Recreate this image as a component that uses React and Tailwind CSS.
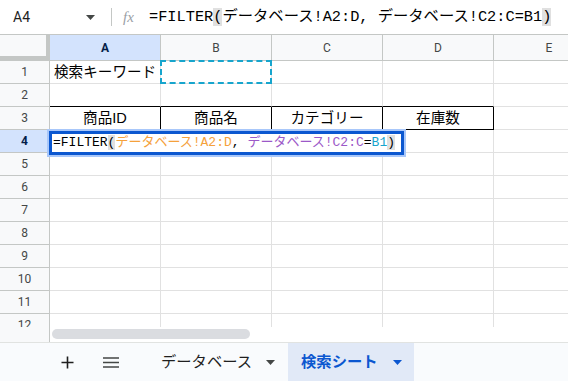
import React from "react";

const SANS = { fontFamily: '"Liberation Sans", Arial, "Noto Sans CJK JP", sans-serif' };
const ROBO = { fontFamily: 'Roboto, "Liberation Sans", "Noto Sans CJK JP", sans-serif' };
const MONO = { fontFamily: '"Liberation Mono", "Noto Sans CJK JP", monospace' };

const COLS = ["A", "B", "C", "D", "E"];

function Caret({ className }) {
  return (
    <svg width="9" height="5" viewBox="0 0 9 5" className={className}>
      <path d="M0 0 L9 0 L4.5 5 Z" fill="currentColor" />
    </svg>
  );
}

function Row({ n }) {
  const active = n === 4;
  return (
    <div className="flex h-[23px] shrink-0">
      <div
        className={`w-[50px] shrink-0 border-r border-b border-[#c4c7c5] flex items-center justify-center text-[12px] ${
          active ? "bg-[#d3e3fd] font-bold text-[#041e49]" : "bg-[#f8f9fa] text-[#444746]"
        }`}
        style={ROBO}
      >
        {n}
      </div>
      {COLS.map((c, i) => {
        let cls = "border-[#e1e1e1]";
        let content = null;
        if (n === 3 && i < 4) cls = "border-black";
        if (n === 2 && i < 4) cls = "border-b-black border-r-[#e1e1e1]";
        if (n === 1 && i === 0)
          content = <span className="pl-[4px] pt-[2px]">検索キーワード</span>;
        if (n === 3) {
          const t = ["商品ID", "商品名", "カテゴリー", "在庫数"][i];
          if (t) content = <span className="w-full text-center pt-[1px]">{t}</span>;
        }
        return (
          <div
            key={c}
            className={`w-[111px] shrink-0 border-r border-b ${cls} flex items-center text-[14.6px] text-black relative`}
            style={SANS}
          >
            {content}
            {n === 1 && i === 1 && (
              <div className="absolute left-[-1px] top-[-1px] w-[112px] h-[24px] border-2 border-dashed border-[#17a5cd]" />
            )}
          </div>
        );
      })}
    </div>
  );
}

export default function App() {
  return (
    <div className="w-[568px] h-[381px] bg-white flex flex-col overflow-hidden relative">
      {/* formula bar */}
      <div className="h-[35px] shrink-0 border-b border-[#c4c7c5] flex items-center">
        <div className="w-[86px] pl-[13px] text-[14px] text-[#1f1f1f]" style={ROBO}>
          A4
        </div>
        <Caret className="text-[#444746] mt-[1px]" />
        <div className="ml-[16px] w-px h-[18px] bg-[#c4c7c5]" />
        <div
          className="ml-[11px] w-[16px] text-[15px] italic text-[#9aa0a6]"
          style={{ fontFamily: '"Liberation Serif", serif' }}
        >
          fx
        </div>
        <div className="ml-[10px] text-[15.3px] text-black whitespace-nowrap" style={MONO}>
          =FILTER<span className="bg-[#e0e0e0]">(</span>データベース!A2:D, データベース!C2:C=B1
          <span className="bg-[#e0e0e0]">)</span>
        </div>
      </div>

      {/* grid */}
      <div className="h-[292px] shrink-0 overflow-hidden relative">
        <div className="flex h-[26px] shrink-0 border-b border-[#c4c7c5] bg-[#f8f9fa]">
          <div className="w-[50px] shrink-0 border-r-4 border-b-4 border-[#c4c7c5] bg-[#f8f9fa]" />
          {COLS.map((c, i) => (
            <div
              key={c}
              className={`w-[111px] shrink-0 border-r border-[#c4c7c5] flex items-center justify-center text-[12px] ${
                i === 0 ? "bg-[#d3e3fd] font-bold text-[#041e49]" : "text-[#444746]"
              }`}
              style={ROBO}
            >
              {c}
            </div>
          ))}
        </div>
        {Array.from({ length: 12 }, (_, k) => (
          <Row key={k} n={k + 1} />
        ))}

        {/* in-cell editor */}
        <div className="absolute left-[47px] top-[94px] w-[359px] h-[28px] border-2 border-[#a8c7fa]">
          <div className="w-full h-full border-[3px] border-[#0b57d0] bg-white flex items-center pl-[1px]">
            <span className="text-[13px] text-black whitespace-nowrap" style={MONO}>
              =FILTER<span className="bg-[#e0e0e0]">(</span>
              <span className="text-[#f5a13b]">データベース!A2:D</span>,{" "}
              <span className="text-[#9c59c8]">データベース!C2:C</span>=
              <span className="text-[#17a5cd]">B1</span>
              <span className="bg-[#e0e0e0]">)</span>
            </span>
          </div>
        </div>
      </div>

      {/* scrollbar */}
      <div className="h-[15px] shrink-0 flex">
        <div className="w-[50px] shrink-0 bg-[#f8f9fa] border-r border-[#c4c7c5]" />
        <div className="flex-1 pl-[2px] pt-[2px]">
          <div className="w-[198px] h-[10px] rounded-full bg-[#dadce0]" />
        </div>
      </div>

      {/* sheet tabs */}
      <div className="h-[39px] shrink-0 border-t border-[#e1e3e1] bg-[#f9fbfd] flex items-stretch">
        <div className="w-[61px]" />
        <div className="flex items-center">
          <svg width="13" height="13" viewBox="0 0 13 13">
            <path d="M6.5 0.5 V12.5 M0.5 6.5 H12.5" stroke="#1f1f1f" strokeWidth="1.6" />
          </svg>
        </div>
        <div className="w-[29px]" />
        <div className="flex items-center">
          <svg width="16" height="11" viewBox="0 0 16 11">
            <path d="M0 1 H16 M0 5.5 H16 M0 10 H16" stroke="#444746" strokeWidth="1.6" />
          </svg>
        </div>
        <div className="w-[42px]" />
        <div className="flex items-center text-[15.3px] text-[#1f1f1f]" style={SANS}>
          データベース
        </div>
        <div className="flex items-center ml-[14px]">
          <Caret className="text-[#444746]" />
        </div>
        <div className="w-[13px]" />
        <div className="w-[126px] bg-[#e1e9f7] flex items-center pl-[13px]">
          <span className="text-[15.3px] font-bold text-[#0b57d0]" style={SANS}>
            検索シート
          </span>
          <Caret className="text-[#0b57d0] ml-[15px]" />
        </div>
      </div>
    </div>
  );
}
